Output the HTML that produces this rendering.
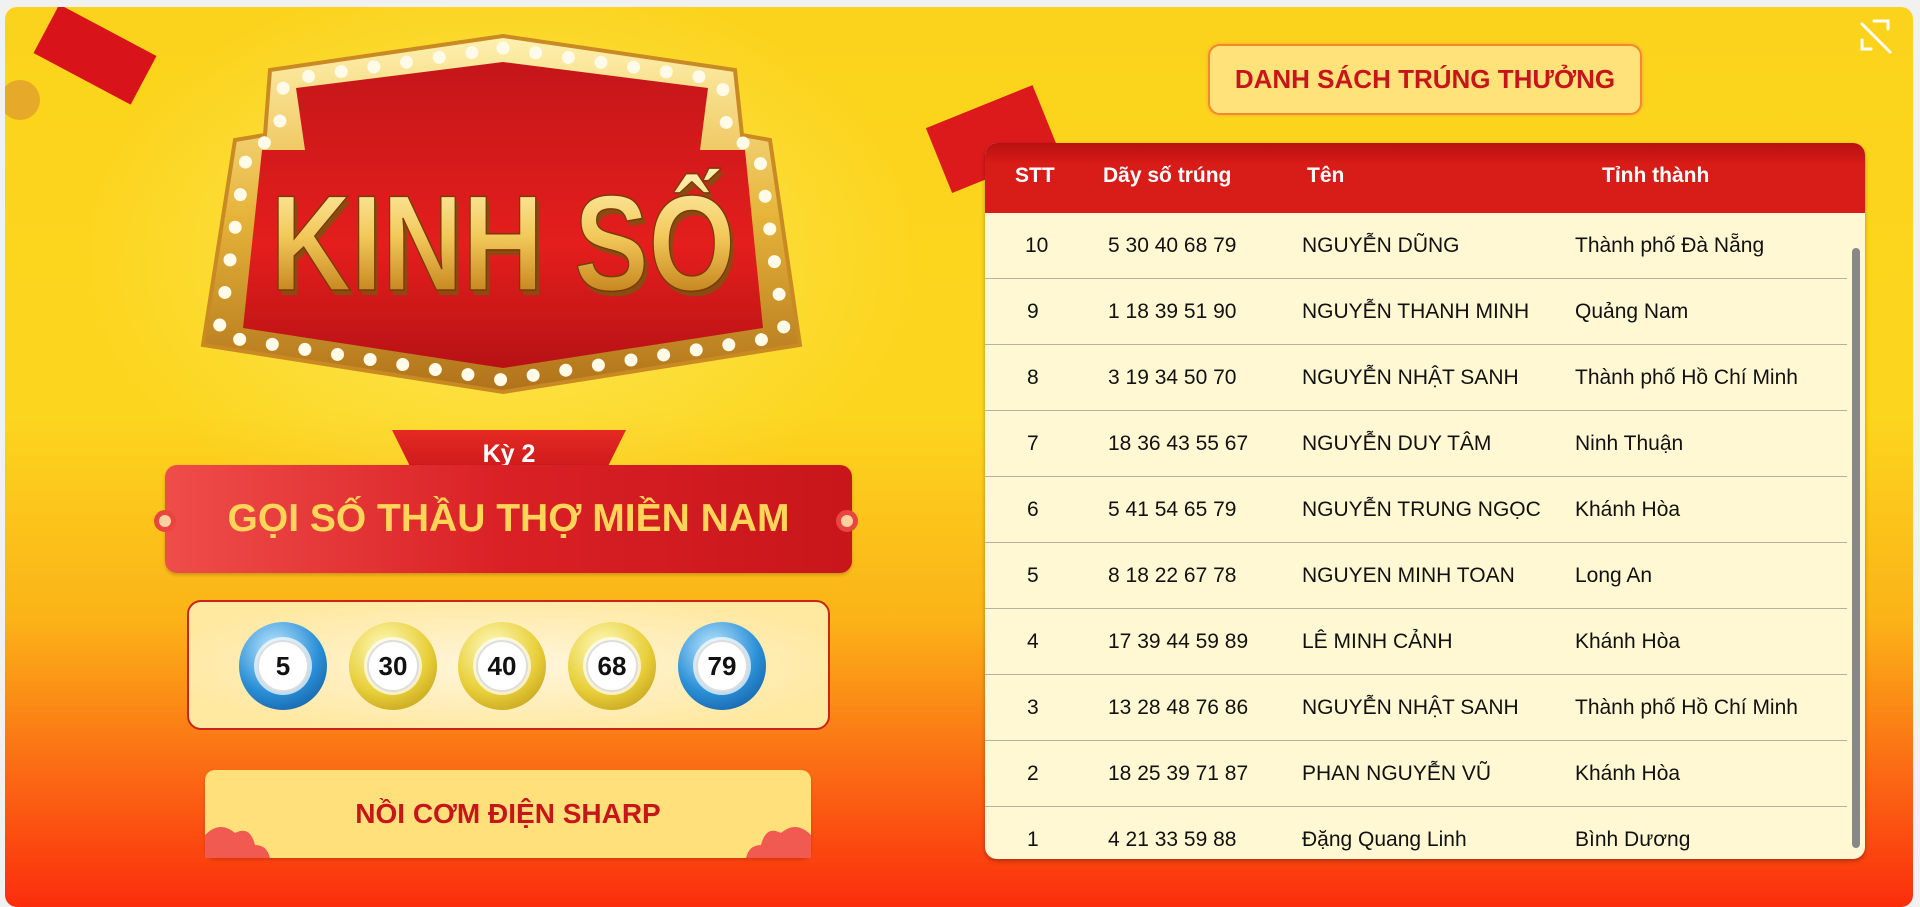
<!DOCTYPE html>
<html><head><meta charset="utf-8"><style>
*{margin:0;padding:0;box-sizing:border-box}
body{width:1920px;height:893px;background:#f1f1f1;font-family:"Liberation Sans","DejaVu Sans",sans-serif;overflow:hidden;position:relative}
.card{position:absolute;left:5px;top:7px;width:1908px;height:900px;border-radius:12px;overflow:hidden;
background:linear-gradient(180deg,#fbd31c 0%,#fcd61e 45%,#fbb318 68%,#fb6a14 85%,#fb2d0c 100%)}
.inner{position:absolute;left:-5px;top:-7px;width:1920px;height:900px}
.glow{position:absolute;left:0;top:0;width:100%;height:100%;background:radial-gradient(ellipse 600px 400px at 500px 250px,rgba(255,250,150,.5),transparent 70%)}
.abs{position:absolute}
.tab{left:392px;top:430px;width:234px;height:54px;background:linear-gradient(#e52a22,#c4141a);clip-path:polygon(0 0,100% 0,92% 70%,50% 100%,8% 70%);color:#fff;font-weight:bold;font-size:25px;text-align:center;line-height:48px}
.banner{left:165px;top:465px;width:687px;height:108px;background:linear-gradient(90deg,#ef4d4a,#d92025 50%,#c8161b);border-radius:12px;color:#ffd55a;font-weight:bold;font-size:39px;text-align:center;line-height:108px;box-shadow:0 2px 3px rgba(0,0,0,.2)}
.dot{width:22px;height:22px;border-radius:50%;background:#ffd0a0;border:5px solid #e94540;top:510px}
.nums{left:187px;top:600px;width:643px;height:130px;border:2px solid #c8261a;border-radius:14px;background:radial-gradient(ellipse at center,#fff6dc,#ffe8a0 80%)}
.ball{width:88px;height:88px;border-radius:50%;top:622px;display:flex;align-items:center;justify-content:center}
.ball.b{background:radial-gradient(circle at 40% 30%,#bfe8ff,#2a8fd6 55%,#0e4d93)}
.ball.y{background:radial-gradient(circle at 40% 30%,#fffbc0,#e8cf3a 55%,#b58e10)}
.ball span{width:52px;height:52px;border-radius:50%;background:#fff;border:2px solid #ddd;box-shadow:0 0 0 3px rgba(255,255,255,.7);display:flex;align-items:center;justify-content:center;font-weight:bold;font-size:26px;color:#111}
.prize{left:205px;top:770px;width:606px;height:88px;background:#ffe07a;border-radius:10px;color:#c7161b;font-weight:bold;font-size:28px;text-align:center;line-height:88px;box-shadow:0 2px 3px rgba(0,0,0,.15)}
.btn{left:1208px;top:44px;width:434px;height:71px;background:#ffe27a;border:2px solid #f28a2a;border-radius:12px;color:#c7161b;font-weight:bold;font-size:26px;text-align:center;line-height:67px;box-shadow:0 0 3px #f2a040}
.table{left:985px;top:143px;width:880px;height:716px;border-radius:12px;overflow:hidden;background:#fff8d2;box-shadow:0 2px 4px rgba(0,0,0,.3)}
.th{height:70px;background:linear-gradient(#b81010,#d81c18 30%,#d81c18);color:#fff;font-weight:bold;font-size:21px;position:relative}
.th div,.row div{position:absolute;top:0;line-height:66px}
.row{height:66px;position:relative;border-bottom:1px solid #b8b0a0;font-size:21px;color:#111;width:862px}
.sb{position:absolute;right:5px;top:105px;width:8px;height:600px;background:#888;border-radius:4px}
</style></head><body>
<div class="card"><div class="inner">
<div class="glow"></div>
<svg class="abs" style="left:0;top:0" width="1920" height="893">
<defs>
<linearGradient id="gd" x1="0" y1="0" x2="0" y2="1"><stop offset="0" stop-color="#fff1b0"/><stop offset=".5" stop-color="#e6b43a"/><stop offset="1" stop-color="#b0721a"/></linearGradient>
<linearGradient id="rd" x1="0" y1="0" x2="0" y2="1"><stop offset="0" stop-color="#c5161a"/><stop offset=".6" stop-color="#e41e1c"/><stop offset="1" stop-color="#b71215"/></linearGradient>
<linearGradient id="tx" x1="0" y1="0" x2="0" y2="1"><stop offset="0" stop-color="#fff3b8"/><stop offset=".45" stop-color="#f2c95a"/><stop offset=".8" stop-color="#c98a22"/><stop offset="1" stop-color="#8a4a10"/></linearGradient>
</defs>
<rect x="40" y="28" width="110" height="55" fill="#d8141a" transform="rotate(28 97 55)"/>
<rect x="935" y="105" width="115" height="70" fill="#dc1a1c" transform="rotate(-22 990 140)"/>
<circle cx="20" cy="100" r="20" fill="#e7a92a"/>
<polygon points="503,36 735,70 742,135 770,140 800,345 503,392 203,345 235,140 265,135 270,70" fill="url(#gd)" stroke="#c98a24" stroke-width="4"/>
<polygon points="503,62 708,88 700,150 745,150 763,328 503,368 243,328 262,150 305,150 296,88" fill="url(#rd)"/>
<polygon points="503,48 722,80 728,140 758,146 785,336 503,380 218,336 248,146 278,140 284,80 503,48" fill="none" stroke="#fffbe8" stroke-width="13" stroke-linecap="round" stroke-dasharray="0 33"/>
<text x="503" y="290" text-anchor="middle" font-family="Liberation Sans" font-weight="bold" font-size="136" fill="#8a4a10" transform="translate(503 0) scale(0.82 1) translate(-503 0)" dx="4" dy="5">KINH SỐ</text>
<text x="503" y="290" text-anchor="middle" font-family="Liberation Sans" font-weight="bold" font-size="136" fill="url(#tx)" stroke="#7a3a08" stroke-width="1.5" transform="translate(503 0) scale(0.82 1) translate(-503 0)">KINH SỐ</text>
<g stroke="#fff" stroke-width="3" fill="none" stroke-linecap="round">
<path d="M1862 24 L1890 52"/><path d="M1874 21 H1888 V29"/><path d="M1862 40 V49 H1871"/>
</g>
</svg>
<div class="abs tab">Kỳ 2</div>
<div class="abs banner">GỌI SỐ THẦU THỢ MIỀN NAM</div>
<div class="abs dot" style="left:154px"></div>
<div class="abs dot" style="left:836px"></div>
<div class="abs nums"></div>
<div class="abs ball b" style="left:239px"><span>5</span></div>
<div class="abs ball y" style="left:349px"><span>30</span></div>
<div class="abs ball y" style="left:458px"><span>40</span></div>
<div class="abs ball y" style="left:568px"><span>68</span></div>
<div class="abs ball b" style="left:678px"><span>79</span></div>
<div class="abs prize">NỒI CƠM ĐIỆN SHARP</div>
<svg class="abs" style="left:205px;top:815px" width="606" height="43">
<path d="M0 43 V20 Q15 5 30 18 Q45 10 50 30 Q62 30 65 43 Z" fill="#f05a50"/>
<path d="M606 43 V20 Q591 5 576 18 Q561 10 556 30 Q544 30 541 43 Z" fill="#f05a50"/>
</svg>
<div class="abs btn">DANH SÁCH TRÚNG THƯỞNG</div>
<div class="abs table">
<div class="th"><div style="left:30px">STT</div><div style="left:118px">Dãy số trúng</div><div style="left:322px">Tên</div><div style="left:617px">Tỉnh thành</div></div>
<div class="row"><div style="left:40px">10</div><div style="left:123px">5 30 40 68 79</div><div style="left:317px">NGUYỄN DŨNG</div><div style="left:590px">Thành phố Đà Nẵng</div></div>
<div class="row"><div style="left:42px">9</div><div style="left:123px">1 18 39 51 90</div><div style="left:317px">NGUYỄN THANH MINH</div><div style="left:590px">Quảng Nam</div></div>
<div class="row"><div style="left:42px">8</div><div style="left:123px">3 19 34 50 70</div><div style="left:317px">NGUYỄN NHẬT SANH</div><div style="left:590px">Thành phố Hồ Chí Minh</div></div>
<div class="row"><div style="left:42px">7</div><div style="left:123px">18 36 43 55 67</div><div style="left:317px">NGUYỄN DUY TÂM</div><div style="left:590px">Ninh Thuận</div></div>
<div class="row"><div style="left:42px">6</div><div style="left:123px">5 41 54 65 79</div><div style="left:317px">NGUYỄN TRUNG NGỌC</div><div style="left:590px">Khánh Hòa</div></div>
<div class="row"><div style="left:42px">5</div><div style="left:123px">8 18 22 67 78</div><div style="left:317px">NGUYEN MINH TOAN</div><div style="left:590px">Long An</div></div>
<div class="row"><div style="left:42px">4</div><div style="left:123px">17 39 44 59 89</div><div style="left:317px">LÊ MINH CẢNH</div><div style="left:590px">Khánh Hòa</div></div>
<div class="row"><div style="left:42px">3</div><div style="left:123px">13 28 48 76 86</div><div style="left:317px">NGUYỄN NHẬT SANH</div><div style="left:590px">Thành phố Hồ Chí Minh</div></div>
<div class="row"><div style="left:42px">2</div><div style="left:123px">18 25 39 71 87</div><div style="left:317px">PHAN NGUYỄN VŨ</div><div style="left:590px">Khánh Hòa</div></div>
<div class="row" style="border:none"><div style="left:42px">1</div><div style="left:123px">4 21 33 59 88</div><div style="left:317px">Đặng Quang Linh</div><div style="left:590px">Bình Dương</div></div>
<div class="sb"></div>
</div>
</div></div>
</body></html>
